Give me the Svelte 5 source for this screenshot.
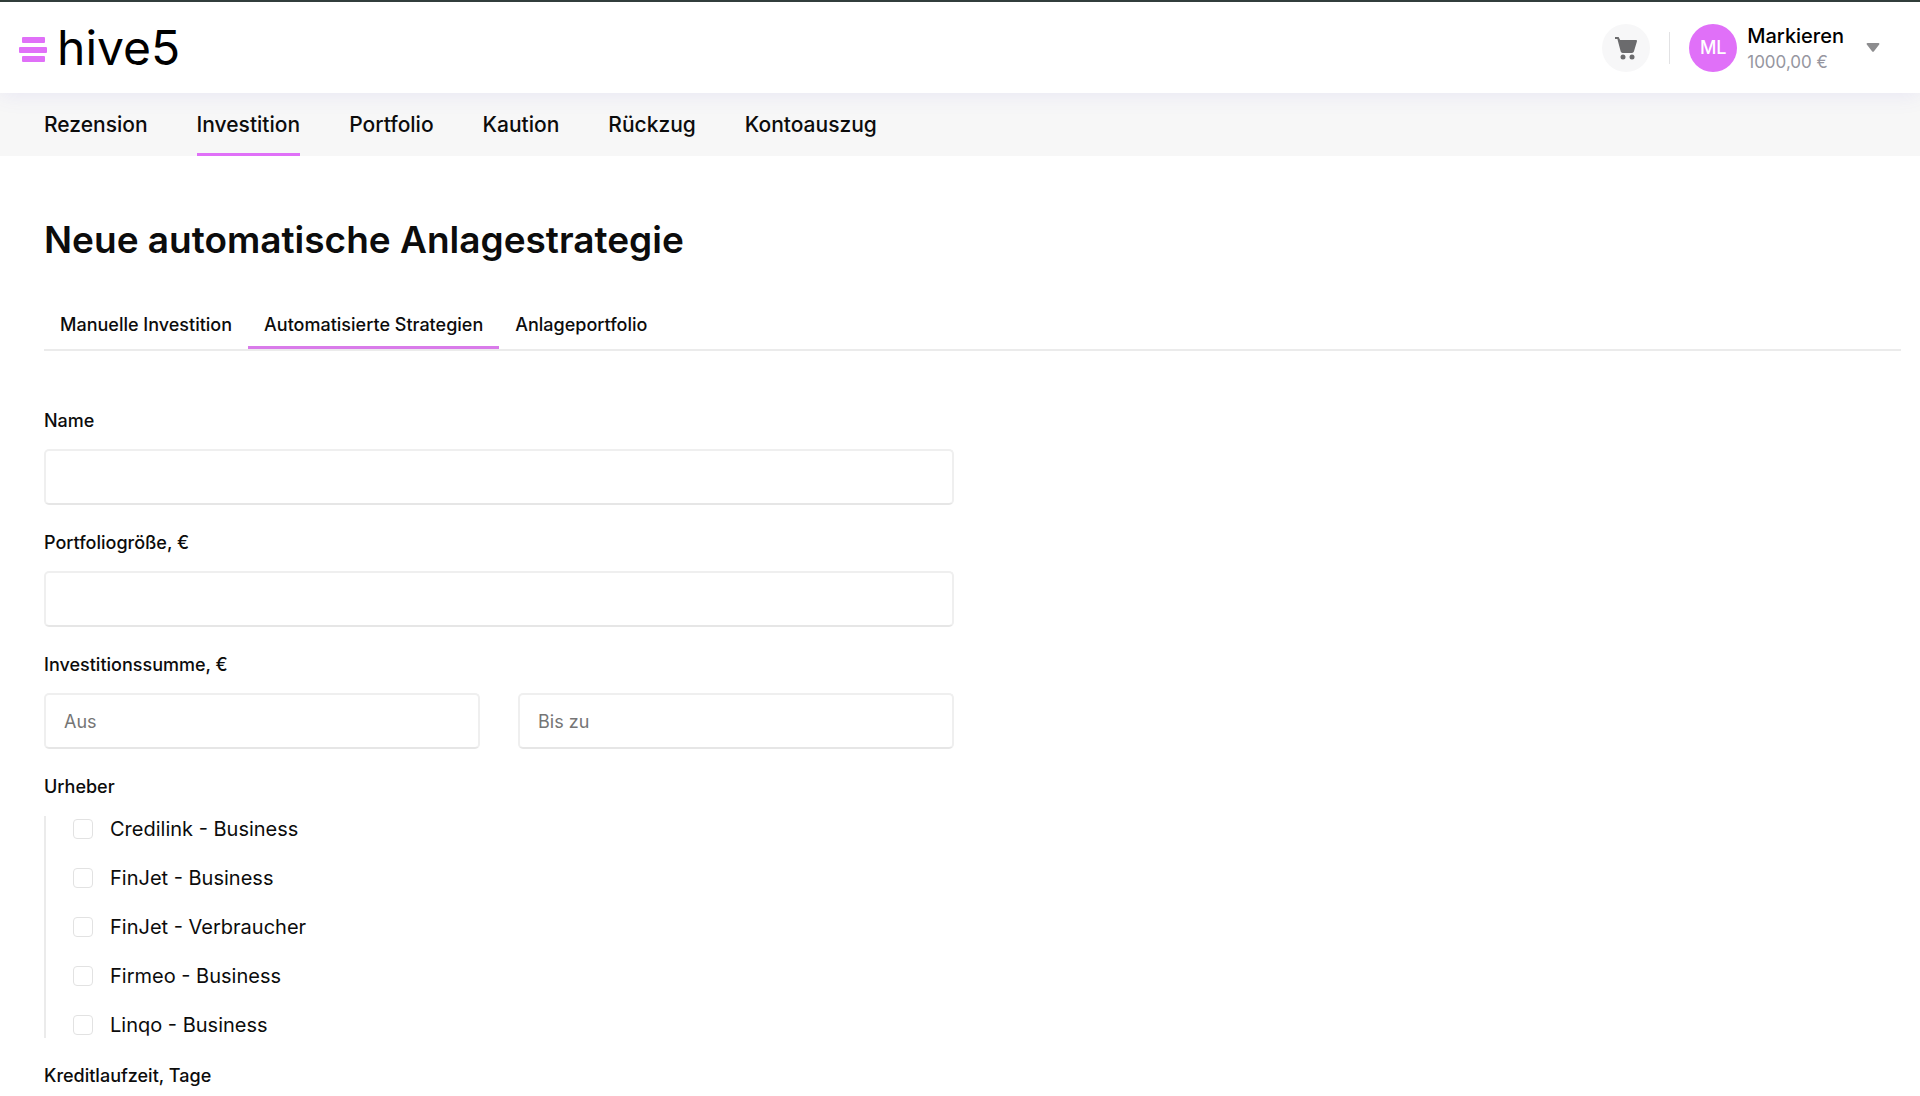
<script>
    const navItems = ['Rezension', 'Investition', 'Portfolio', 'Kaution', 'Rückzug', 'Kontoauszug'];
    const tabs = ['Manuelle Investition', 'Automatisierte Strategien', 'Anlageportfolio'];
    const originators = [
        'Credilink - Business',
        'FinJet - Business',
        'FinJet - Verbraucher',
        'Firmeo - Business',
        'Linqo - Business'
    ];

    let activeNav = $state('Investition');
    let activeTab = $state('Automatisierte Strategien');
    let selected = $state([]);

    let name = $state('');
    let size = $state('');
    let amountFrom = $state('');
    let amountTo = $state('');
</script>

<div class="page">
    <header class="header">
        <a class="logo" href="#home">
            <svg width="28" height="26" viewBox="0 0 28 26" aria-hidden="true">
                <rect x="3" y="0" width="23" height="6" rx="1" />
                <rect x="0" y="10" width="28" height="6" rx="1" />
                <rect x="3" y="19" width="23" height="6" rx="1" />
            </svg>
            <span>hive5</span>
        </a>

        <div class="account">
            <button class="cart" type="button" aria-label="Warenkorb">
                <svg width="24" height="24" viewBox="0 0 24 24" aria-hidden="true">
                    <path d="M1 1h3.6l1.5 3H22c.8 0 1.2.7.9 1.400l-3 10.200c-.3.900-1 1.400-1.900 1.400H8.600c-.900 0-1.600-.5-1.900-1.400L3.400 3H1z" />
                    <circle cx="9" cy="21" r="2.500" />
                    <circle cx="18" cy="21" r="2.500" />
                </svg>
            </button>
            <span class="divider"></span>
            <button class="user" type="button">
                <span class="avatar">ML</span>
                <span class="user-info">
                    <span class="user-name">Markieren</span>
                    <span class="balance">1000,00 €</span>
                </span>
                <svg class="caret" width="14" height="9" viewBox="0 0 14 9" aria-hidden="true">
                    <path d="M1.500 0h11c.8 0 1.200.8.7 1.400L8 8.300c-.5.700-1.500.7-2 0L.8 1.400C.3.800.7 0 1.500 0z" />
                </svg>
            </button>
        </div>
    </header>

    <nav class="nav">
        {#each navItems as item}
            <a href="#{item}" class:active={item === activeNav} onclick={() => (activeNav = item)}>{item}</a>
        {/each}
    </nav>

    <main class="content">
        <h1>Neue automatische Anlagestrategie</h1>

        <div class="tabs" role="tablist">
            {#each tabs as tab}
                <button
                    type="button"
                    role="tab"
                    aria-selected={tab === activeTab}
                    class:active={tab === activeTab}
                    onclick={() => (activeTab = tab)}
                >{tab}</button>
            {/each}
        </div>

        <form class="form">
            <div class="field">
                <label for="name">Name</label>
                <input id="name" type="text" bind:value={name} />
            </div>

            <div class="field">
                <label for="size">Portfoliogröße, €</label>
                <input id="size" type="text" bind:value={size} />
            </div>

            <div class="field">
                <label for="amount-from">Investitionssumme, €</label>
                <div class="range">
                    <input id="amount-from" type="text" placeholder="Aus" bind:value={amountFrom} />
                    <input type="text" placeholder="Bis zu" aria-label="Bis zu" bind:value={amountTo} />
                </div>
            </div>

            <fieldset>
                <legend>Urheber</legend>
                <div class="options">
                    {#each originators as originator}
                        <label class="option">
                            <input type="checkbox" value={originator} bind:group={selected} />
                            <span>{originator}</span>
                        </label>
                    {/each}
                </div>
            </fieldset>

            <div class="term">Kreditlaufzeit, Tage</div>
        </form>
    </main>
</div>

<style>
    :global(body) {
        background: #fff;
        overflow: hidden;
    }

    .page {
        --accent: #e070f8;
        --line: #ebebeb;
        font-family: Inter, "Liberation Sans", sans-serif;
        font-size: 18px;
        color: #0c0c0c;
        border-top: 2px solid #303d36;
    }

    .page *,
    .page {
        box-sizing: border-box;
    }

    button,
    input {
        font: inherit;
        color: inherit;
    }

    button {
        border: 0;
        padding: 0;
        background: none;
        cursor: pointer;
    }

    a {
        color: inherit;
        text-decoration: none;
    }

    .header {
        position: relative;
        display: flex;
        align-items: center;
        justify-content: space-between;
        height: 91px;
        padding: 0 40px 0 19px;
        background: #fff;
        box-shadow: 0 2px 20px rgba(100, 90, 220, 0.1);
    }

    .logo {
        display: flex;
        align-items: center;
        gap: 10px;
        font-size: 48px;
        line-height: 56px;
        color: #000;
    }

    .logo svg {
        margin-top: 4px;
        fill: var(--accent);
    }

    .account,
    .user {
        display: flex;
        align-items: center;
    }

    .cart {
        display: grid;
        place-items: center;
        width: 48px;
        height: 48px;
        border-radius: 50%;
        background: #f7f7f8;
    }

    .cart svg {
        fill: #6b6b6d;
    }

    .divider {
        width: 1px;
        height: 32px;
        margin: 0 19px;
        background: #e2e2e4;
    }

    .avatar {
        display: grid;
        place-items: center;
        width: 48px;
        height: 48px;
        border-radius: 50%;
        background: var(--accent);
        color: #fff;
        font-weight: 500;
    }

    .user-info {
        display: flex;
        flex-direction: column;
        margin: 0 22px 0 10px;
        padding-top: 2px;
        line-height: 26px;
        text-align: left;
    }

    .user-name {
        font-size: 20px;
        font-weight: 500;
        color: #000;
    }

    .balance {
        font-size: 17px;
        color: #9696a0;
    }

    .caret {
        fill: #8d8d8f;
    }

    .nav {
        display: flex;
        gap: 49px;
        height: 63px;
        padding: 0 44px;
        background: #f7f7f7;
        font-size: 21px;
        font-weight: 500;
        line-height: 24px;
    }

    .nav a {
        padding-top: 20px;
        border-bottom: 3px solid transparent;
    }

    .nav a.active {
        border-color: var(--accent);
    }

    .content {
        padding: 60px 19px 0 44px;
    }

    h1 {
        margin: 0;
        font-size: 37px;
        font-weight: 600;
        line-height: 48px;
    }

    .tabs {
        display: flex;
        margin-top: 40px;
        border-bottom: 2px solid var(--line);
    }

    .tabs button {
        padding: 0 16px;
        border-bottom: 3px solid transparent;
        font-weight: 500;
        line-height: 42px;
    }

    .tabs button.active {
        border-color: #d97bea;
    }

    .form {
        max-width: 910px;
        margin-top: 58px;
        font-weight: 500;
    }

    .field {
        display: flex;
        flex-direction: column;
        gap: 16px;
        margin-bottom: 26px;
    }

    .field label,
    legend,
    .term {
        line-height: 24px;
    }

    input[type='text'] {
        width: 100%;
        height: 56px;
        padding: 0 18px;
        border: 2px solid #efefef;
        border-bottom-color: #e6e6e6;
        border-radius: 5px;
        background: #fff;
        font-weight: 400;
    }

    input::placeholder {
        color: #757575;
        opacity: 1;
    }

    .range {
        display: grid;
        grid-template-columns: 1fr 1fr;
        gap: 38px;
    }

    fieldset {
        margin: 0;
        padding: 0;
        border: 0;
    }

    legend {
        padding: 0;
    }

    .options {
        display: flex;
        flex-direction: column;
        gap: 25px;
        margin-top: 17px;
        padding: 1px 0 1px 27px;
        border-left: 2px solid var(--line);
    }

    .option {
        display: flex;
        align-items: center;
        gap: 17px;
        font-size: 20px;
        font-weight: 400;
        line-height: 24px;
    }

    .option input {
        appearance: none;
        width: 20px;
        height: 20px;
        margin: 0;
        border: 1px solid #e2e2e2;
        border-radius: 4px;
        background: #fff;
    }

    .option input:checked {
        background: var(--accent);
    }

    .term {
        margin-top: 26px;
    }
</style>
